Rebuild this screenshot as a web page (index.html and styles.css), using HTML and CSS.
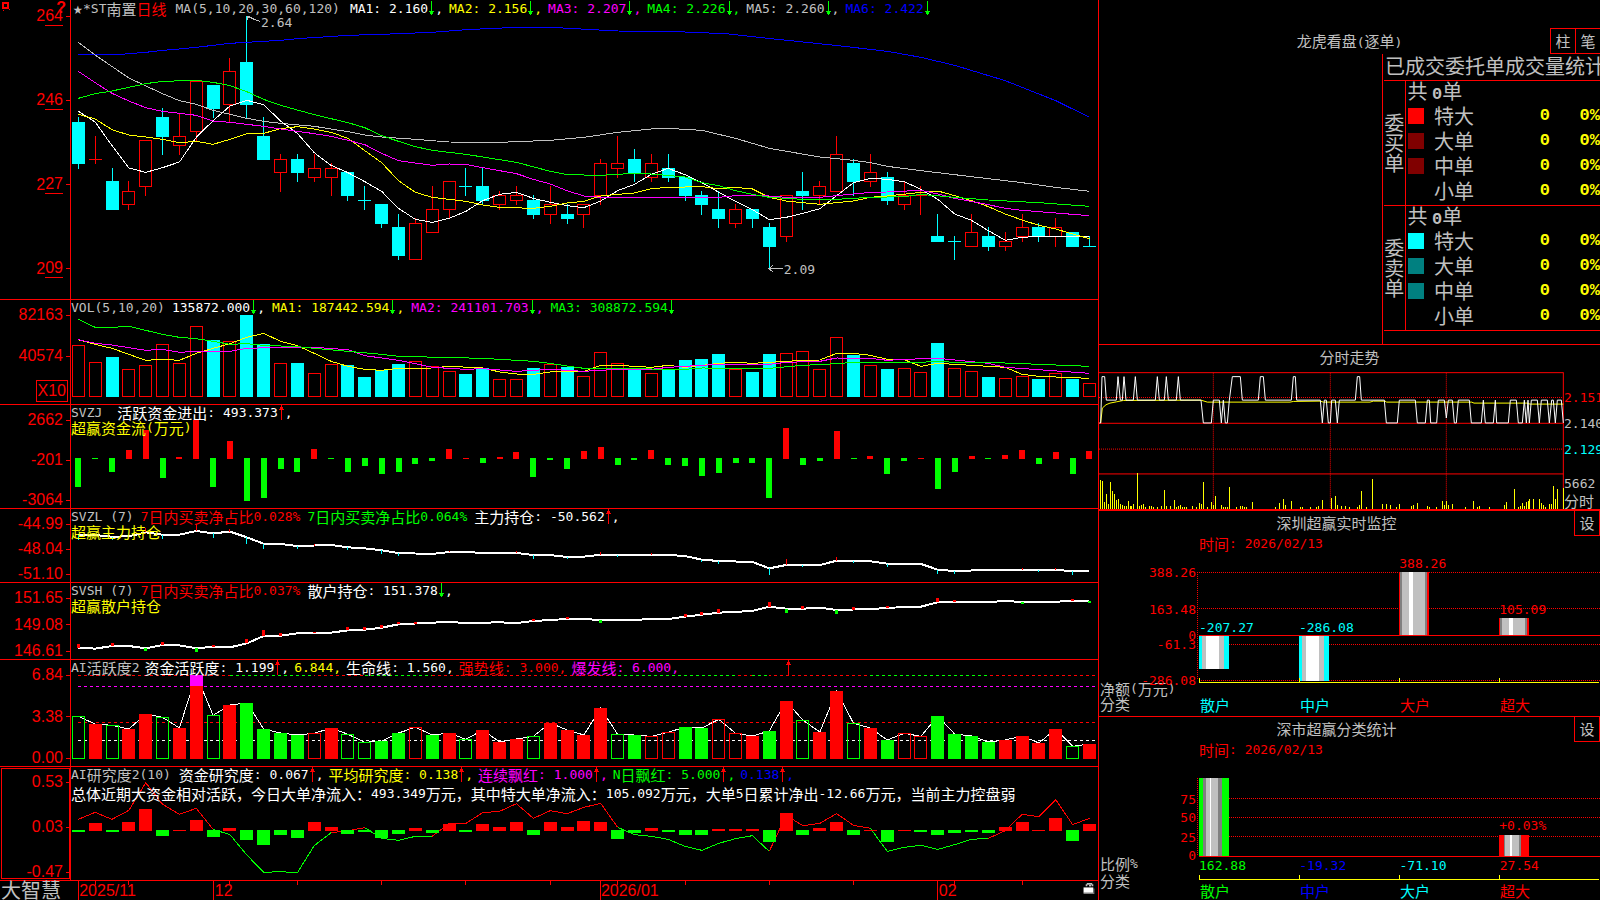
FILE: index.html
```html
<!DOCTYPE html>
<html lang="zh-CN">
<head>
<meta charset="utf-8">
<title>大智慧 *ST南置</title>
<link rel="stylesheet" href="styles.css">
</head>
<body>
<svg class="defs" aria-hidden="true">
  <symbol id="dn" viewBox="0 0 7 15"><path d="M3 0h1v14h-1zM1 10h5v1h-5zM2 11h3v2h-3z" fill="#0f0"/></symbol>
  <symbol id="up" viewBox="0 0 7 15"><path d="M3 0h1v15h-1zM2 2h3v2h-3zM1 4h5v1h-5z" fill="#f00"/></symbol>
</svg>
<main class="app">
  <section class="left">
    <article class="panel p-main">
      <div class="axis axis-main">
        <svg class="corner" viewBox="0 0 9 9"><path d="M0 0h7v7h-7zM2 2v3h3v-3z" fill="#f00" fill-rule="evenodd"/><path d="M7 7h1v1h-1zM1 8h1v1h-1z" fill="#f00"/></svg>
        <b class="query">?</b>
        <span>2<u>64</u></span><span>2<u>46</u></span><span>2<u>27</u></span><span>2<u>09</u></span>
      </div>
      <div class="plot">
        <svg class="chart" id="kline" viewBox="0 0 1027 897" preserveAspectRatio="none"></svg>
        <header class="line lead">
          <span class="grp gray name"><span class="star">★</span>*ST<span class="zh">南置</span><span class="zh red">日线</span></span>
          <span class="gray params">MA(5,10,20,30,60,120)</span>
          <span class="grp white">MA1: 2.160<svg class="ar"><use href="#dn"/></svg>,</span>
          <span class="grp yellow">MA2: 2.156<svg class="ar"><use href="#dn"/></svg>,</span>
          <span class="grp magenta">MA3: 2.207<svg class="ar"><use href="#dn"/></svg>,</span>
          <span class="grp green">MA4: 2.226<svg class="ar"><use href="#dn"/></svg>,</span>
          <span class="grp gray">MA5: 2.260<svg class="ar"><use href="#dn"/></svg>,</span>
          <span class="grp blue">MA6: 2.422<svg class="ar"><use href="#dn"/></svg></span>
        </header>
        <span class="callout hi">2.64</span>
        <span class="callout lo">2.09</span>
      </div>
    </article>

    <article class="panel">
      <div class="axis axis-vol"><span>82163</span><span class="mid">40574</span><em>X10</em></div>
      <div class="plot">
        <svg class="chart" id="vol" viewBox="0 15 1027 312" preserveAspectRatio="none"></svg>
        <header class="line loose">
          <span class="gray">VOL(5,10,20)</span>
          <span class="grp white">135872.000<svg class="ar"><use href="#dn"/></svg>,</span>
          <span class="grp yellow">MA1: 187442.594<svg class="ar"><use href="#dn"/></svg>,</span>
          <span class="grp magenta">MA2: 241101.703<svg class="ar"><use href="#dn"/></svg>,</span>
          <span class="grp green">MA3: 308872.594<svg class="ar"><use href="#dn"/></svg></span>
        </header>
      </div>
    </article>

    <article class="panel">
      <div class="axis"><span>2662</span><span>-201</span><span>-3064</span></div>
      <div class="plot">
        <svg class="chart" id="flow" viewBox="0 330 1027 309" preserveAspectRatio="none"></svg>
        <header class="line">
          <span class="gray wide">SVZJ</span>
          <span class="grp white"><span class="zh">活跃资金进出</span>: 493.373<svg class="ar"><use href="#up"/></svg>,</span>
        </header>
        <div class="line yellow"><span class="grp"><span class="zh">超赢资金流</span>(<span class="zh">万元</span>)</span></div>
      </div>
    </article>

    <article class="panel">
      <div class="axis"><span>-44.99</span><span>-48.04</span><span>-51.10</span></div>
      <div class="plot">
        <svg class="chart" id="hold" viewBox="0 642 1027 219" preserveAspectRatio="none"></svg>
        <header class="line loose">
          <span class="gray">SVZL (7)</span>
          <span class="grp red">7<span class="zh">日内买卖净占比</span>0.028%</span>
          <span class="grp green">7<span class="zh">日内买卖净占比</span>0.064%</span>
          <span class="grp white"><span class="zh">主力持仓</span>: -50.562<svg class="ar"><use href="#up"/></svg>,</span>
        </header>
        <div class="line yellow"><span class="zh">超赢主力持仓</span></div>
      </div>
    </article>

    <article class="panel">
      <div class="axis"><span>151.65</span><span>149.08</span><span>146.61</span></div>
      <div class="plot">
        <svg class="chart" id="retail" viewBox="0 9 1027 228" preserveAspectRatio="none"></svg>
        <header class="line loose">
          <span class="gray">SVSH (7)</span>
          <span class="grp red">7<span class="zh">日内买卖净占比</span>0.037%</span>
          <span class="grp white"><span class="zh">散户持仓</span>: 151.378<svg class="ar"><use href="#dn"/></svg>,</span>
        </header>
        <div class="line yellow"><span class="zh">超赢散户持仓</span></div>
      </div>
    </article>

    <article class="panel">
      <div class="axis"><span>6.84</span><span>3.38</span><span>0.00</span></div>
      <div class="plot">
        <svg class="chart" id="active" viewBox="0 240 1027 318" preserveAspectRatio="none"></svg>
        <header class="line">
          <span class="grp gray">AI<span class="zh">活跃度</span>2</span>
          <span class="grp white"><span class="zh">资金活跃度</span>: 1.199<svg class="ar"><use href="#up"/></svg>,</span>
          <span class="yellow">6.844,</span>
          <span class="grp white"><span class="zh">生命线</span>: 1.560,</span>
          <span class="grp red"><span class="zh">强势线</span>: 3.000,</span>
          <span class="grp magenta"><span class="zh">爆发线</span>: 6.000,</span>
          <svg class="ar lone"><use href="#up"/></svg>
        </header>
      </div>
    </article>

    <article class="panel">
      <div class="axis axis-sel"><span>0.53</span><span>0.03</span><span>-0.47</span></div>
      <div class="plot">
        <svg class="chart" id="study" viewBox="0 561 1027 339" preserveAspectRatio="none"></svg>
        <header class="line">
          <span class="grp gray">AI<span class="zh">研究度</span>2(10)</span>
          <span class="grp white lg"><span class="zh">资金研究度</span>: 0.067<svg class="ar"><use href="#up"/></svg>,</span>
          <span class="grp yellow"><span class="zh">平均研究度</span>: 0.138<svg class="ar"><use href="#up"/></svg>,</span>
          <span class="grp magenta"><span class="zh">连续飘红</span>: 1.000<svg class="ar"><use href="#up"/></svg>,</span>
          <span class="grp green">N<span class="zh">日飘红</span>: 5.000<svg class="ar"><use href="#up"/></svg>,</span>
          <span class="grp blue">0.138<svg class="ar"><use href="#up"/></svg>,</span>
        </header>
        <p class="line note white"><span class="zh">总体近期大资金相对活跃，今日大单净流入：</span>493.349<span class="zh">万元，其中特大单净流入：</span>105.092<span class="zh">万元，大单</span>5<span class="zh">日累计净出</span>-12.66<span class="zh">万元，当前主力控盘弱</span></p>
      </div>
    </article>

    <footer class="timeline">
      <div class="brand">大智慧</div>
      <div class="plot">
        <svg class="chart" id="dates" viewBox="0 903 1027 57" preserveAspectRatio="none"></svg>
        <span class="date d1">2025/11</span><span class="date d2">12</span><span class="date d3">2026/01</span><span class="date d4">02</span>
        <svg class="lock" viewBox="0 0 11 12"><path d="M2 4V2h1V1h5v1h1v2h-1.500V2.500h-4V4z" fill="#c0c0c0"/><path d="M5 3h2v1h-2z" fill="#fff"/><path d="M0 5h9v5h-9z" fill="#fff"/><path d="M9 6h1v5h-10v-1h9z" fill="#808080"/></svg>
      </div>
    </footer>
  </section>

  <section class="right">
    <article class="orders">
      <header class="orders-head">
        <h2>龙虎看盘<span class="en">(</span>逐单<span class="en">)</span></h2>
        <div class="tabs"><button type="button">柱</button><button type="button">笔</button></div>
      </header>
      <div class="book">
        <h3>已成交委托单成交量统计</h3>
        <table>
          <colgroup><col class="k1"><col class="k2"><col><col class="k3"><col class="k3"></colgroup>
          <tbody>
            <tr><th rowspan="5" scope="rowgroup" class="side">委<br>买<br>单</th><td colspan="4" class="sum">共 <b>0</b>单</td></tr>
            <tr><td><i class="sq c1"></i></td><th scope="row">特大</th><td class="num">0</td><td class="num">0%</td></tr>
            <tr><td><i class="sq c2"></i></td><th scope="row">大单</th><td class="num">0</td><td class="num">0%</td></tr>
            <tr><td><i class="sq c2"></i></td><th scope="row">中单</th><td class="num">0</td><td class="num">0%</td></tr>
            <tr><td></td><th scope="row">小单</th><td class="num">0</td><td class="num">0%</td></tr>
          </tbody>
          <tbody>
            <tr><th rowspan="5" scope="rowgroup" class="side">委<br>卖<br>单</th><td colspan="4" class="sum">共 <b>0</b>单</td></tr>
            <tr><td><i class="sq c3"></i></td><th scope="row">特大</th><td class="num">0</td><td class="num">0%</td></tr>
            <tr><td><i class="sq c4"></i></td><th scope="row">大单</th><td class="num">0</td><td class="num">0%</td></tr>
            <tr><td><i class="sq c4"></i></td><th scope="row">中单</th><td class="num">0</td><td class="num">0%</td></tr>
            <tr><td></td><th scope="row">小单</th><td class="num">0</td><td class="num">0%</td></tr>
          </tbody>
        </table>
      </div>
    </article>

    <article class="intraday">
      <h2>分时走势</h2>
      <div class="intra-body">
        <div class="plot"><svg class="chart" id="intra" viewBox="27 96 1395 414" preserveAspectRatio="none"></svg></div>
        <div class="prices"><span class="red">2.151</span><span class="gray">2.140</span><span class="cyan">2.129</span><small>5662</small><small class="zh">分时</small></div>
      </div>
    </article>

    <article class="stat">
      <header class="stat-head"><h2>深圳超赢实时监控</h2><button type="button">设</button></header>
      <p class="when"><span class="zh">时间</span>: 2026/02/13</p>
      <div class="stat-chart">
        <div class="scale"><span class="v1">388.26</span><span class="v2">163.48</span><span class="v3">0</span><span class="v4">-61.3</span><span class="v5">-286.08</span></div>
        <div class="plot">
          <svg class="chart" id="net" viewBox="321 201 1209 333" preserveAspectRatio="none"></svg>
          <span class="val a cyan">-207.27</span><span class="val b cyan">-286.08</span><span class="val c red">388.26</span><span class="val d red">105.09</span>
        </div>
      </div>
      <div class="cats">
        <div class="names"><span><span class="zh">净额</span>(<span class="zh">万元</span>)</span><span class="zh">分类</span></div>
        <span class="zh cyan">散户</span><span class="zh cyan">中户</span><span class="zh red">大户</span><span class="zh red">超大</span>
      </div>
    </article>

    <article class="stat last">
      <header class="stat-head"><h2>深市超赢分类统计</h2><button type="button">设</button></header>
      <p class="when"><span class="zh">时间</span>: 2026/02/13</p>
      <div class="stat-chart">
        <div class="scale"><span class="w1">75</span><span class="w2">50</span><span class="w3">25</span><span class="w4">0</span>
          <div class="names tall"><span><i class="zh">比例</i>%</span><i class="zh">分类</i></div>
        </div>
        <div class="plot">
          <svg class="chart" id="ratio" viewBox="321 204 1209 306" preserveAspectRatio="none"></svg>
          <span class="val e red">+0.03%</span>
          <div class="vals"><span class="green">162.88</span><span class="blue">-19.32</span><span class="cyan">-71.10</span><span class="red">27.54</span></div>
        </div>
      </div>
      <div class="cats">
        <span class="zh green second">散户</span><span class="zh blue">中户</span><span class="zh cyan">大户</span><span class="zh red">超大</span>
      </div>
    </article>
  </section>
</main>
<script src="charts.js"></script>
</body>
</html>
```

FILE: styles.css
```css
* { box-sizing: border-box; }
body {
  margin: 0;
  background: #000;
  color: #c0c0c0;
  font: 13px/15px "DejaVu Sans Mono", "Liberation Mono", "Noto Sans CJK SC", monospace;
  overflow: hidden;
}
h2, h3, p { margin: 0; font-weight: 400; }
i { font-style: normal; }
.defs { position: absolute; width: 0; height: 0; }
.zh, h2 { font-family: "Noto Sans CJK SC", sans-serif; font-size: 15px; line-height: 15px; font-weight: 400; }
.red { color: #f00; }
.green { color: #0f0; }
.blue { color: #00f; }
.cyan { color: #0ff; }
.yellow { color: #ff0; }
.magenta { color: #f0f; }
.white { color: #fff; }
.gray { color: #c0c0c0; }

.app { display: grid; grid-template-columns: minmax(0, 1099fr) minmax(0, 501fr); min-height: 100vh; }
.left {
  display: grid;
  grid-template-rows: 300fr 105fr 104fr 74fr 77fr 107fr 114fr 19fr;
  border-right: 1px solid #f00;
}
.panel, .timeline { display: grid; grid-template-columns: 71px minmax(0, 1fr); min-height: 0; }
.panel { border-bottom: 1px solid #f00; }
.plot { position: relative; min-width: 0; }
.chart { position: absolute; inset: 0; width: 100%; height: 100%; shape-rendering: crispEdges; }
.chart * { vector-effect: non-scaling-stroke; }

.axis {
  position: relative;
  display: flex;
  flex-direction: column;
  align-items: flex-end;
  justify-content: space-between;
  padding-top: 7px;
  border-right: 1px solid #f00;
  color: #f00;
  font: 16px/16px "Liberation Sans", Arial, sans-serif;
}
.axis span { display: flex; align-items: center; }
.axis span::after { content: ""; width: 4px; height: 1px; margin-left: 3px; background: #f00; }
.axis u { text-decoration: none; border-bottom: 1px solid #f00; line-height: 18px; }
.axis-main { padding-top: 8px; padding-bottom: 22px; }
.axis-main span { height: 16px; }
.axis-vol { justify-content: flex-start; }
.axis-vol .mid { margin-top: 25px; }
.axis-vol em { margin: auto 2px 2px 0; padding: 2px 1px; border: 1px solid #f00; font-style: normal; }
.axis-sel { outline: 1px solid #f00; outline-offset: -2px; }
.corner { position: absolute; left: 2px; top: 2px; width: 9px; height: 9px; }
.query { position: absolute; right: 4px; top: 0; }

.line { position: relative; display: flex; align-items: center; gap: 5px; height: 15px; white-space: nowrap; }
.line.lead { padding-left: 2px; height: 17px; gap: 6px; }
.line.loose { gap: 7px; }
.line.note { gap: 0; margin-top: 4px; }
.grp { display: flex; align-items: center; }
.ar { width: 7px; height: 15px; flex: none; }
.star { width: 10px; font-size: 16px; }
.name { margin-right: 3px; }
.params { margin-right: 4px; }
.lg { margin-left: 3px; }
.wide { margin-right: 10px; }
.lone { margin-left: 101px; }
.callout { position: absolute; }
.callout.hi { left: 18.5%; top: 15px; }
.callout.lo { left: 69.4%; top: 87.5%; }

.brand { padding-left: 1px; font: 400 20px/17px "Noto Sans CJK SC", sans-serif; white-space: nowrap; }
.date { position: absolute; top: 1px; color: #f00; font: 16px/17px "Liberation Sans", Arial, sans-serif; }
.d1 { left: 0.8%; }
.d2 { left: 14%; }
.d3 { left: 51.6%; }
.d4 { left: 84.5%; }
.lock { position: absolute; right: 2px; top: 1px; width: 13px; height: 13px; }

.right { display: grid; grid-template-rows: 345fr 166fr 206fr 183fr; min-width: 0; }
.right h2 { text-align: center; }
button { color: #c0c0c0; background: #000; border: 1px solid #f00; padding: 0; width: 26px; height: 26px; font: 400 15px/20px "Noto Sans CJK SC", sans-serif; }
.orders { display: flex; flex-direction: column; align-items: flex-end; border-bottom: 1px solid #f00; overflow: hidden; }
.orders-head { display: grid; grid-template-columns: 50px 1fr 50px; align-items: center; width: 100%; padding-top: 28px; }
.orders-head h2 { grid-column: 2; }
.en { font: 13px "DejaVu Sans Mono", monospace; }
.tabs { display: flex; }
.tabs button { flex: none; }
.tabs button + button { width: 24px; border-left: 0; border-right: 0; }
.book { flex: 1; width: 218px; padding-left: 1px; border-left: 1px solid #f00; }
.book h3 { height: 26px; padding-left: 1px; font: 400 20px/24px "Noto Sans CJK SC", sans-serif; white-space: nowrap; }
.book table { width: 100%; border-collapse: collapse; table-layout: fixed; font: 400 20px/20px "Noto Sans CJK SC", sans-serif; border-bottom: 1px solid #f00; }
.k1 { width: 21px; }
.k2 { width: 23px; }
.k3 { width: 50px; }
.book tbody { border-top: 1px solid #f00; }
.book tr { height: 25px; }
.book td, .book th { padding: 0; font-weight: 400; white-space: nowrap; vertical-align: top; line-height: 20px; }
.book th { text-align: left; padding-left: 6px; }
.book .side { padding: 0; border-right: 1px solid #f00; text-align: center; vertical-align: middle; }
.book .sum { padding-left: 2px; }
.book .sum b, .book .num { font-family: "Liberation Mono", monospace; font-weight: 700; font-size: 17px; }
.book .num { color: #ff0; text-align: right; }
.sq { display: block; width: 16px; height: 16px; margin: 2px 0 0 2px; }
.c1 { background: #f00; }
.c2 { background: #800000; }
.c3 { background: #0ff; }
.c4 { background: #008080; }

.intraday { display: flex; flex-direction: column; border-bottom: 2px solid #f00; }
.intraday h2 { height: 27px; line-height: 23px; }
.intra-body { flex: 1; display: grid; grid-template-columns: minmax(0, 1fr) 36px; }
.prices { display: flex; flex-direction: column; padding: 13px 0 0; line-height: 26px; }
.prices small { font-size: 13px; line-height: 17px; }
.prices small.zh { font-size: 15px; }
.prices span + small { margin-top: 12px; }

.stat { display: flex; flex-direction: column; border-bottom: 1px solid #f00; }
.stat.last { border-bottom: 0; }
.stat-head { display: grid; grid-template-columns: 1fr 26px; height: 25px; }
.stat-head h2 { line-height: 23px; }
.stat-head button { border-top: 0; height: 25px; }
.stat .when { display: flex; align-items: center; padding: 0 0 0 100px; color: #f00; height: 15px; }
.stat-chart { flex: 1; display: grid; grid-template-columns: 98px minmax(0, 1fr); min-height: 0; margin-top: 21px; }
.scale { position: relative; color: #f00; }
.scale > span { position: absolute; right: 1px; margin-top: -7px; }
.v1 { top: 0; }
.v2 { top: 33%; }
.v3 { top: 57%; }
.v4 { top: 65%; }
.v5 { top: 97%; }
.w1 { top: 20%; }
.w2 { top: 38%; }
.w3 { top: 57%; }
.w4 { top: 75%; }
.val { position: absolute; margin-top: -8px; }
.val.a { left: 0.5%; top: 50%; }
.val.b { left: 25.3%; top: 50%; }
.val.c { left: 50.2%; top: -8px; }
.val.d { left: 75%; top: 34%; }
.val.e { left: 75%; top: 47%; }
.vals { position: absolute; left: 2px; right: 0; top: 78%; display: grid; grid-template-columns: repeat(4, 1fr); }
.cats { display: grid; grid-template-columns: 101px repeat(4, minmax(0, 1fr)); height: 33px; align-items: center; white-space: nowrap; }
.cats > .zh { padding-top: 9px; }
.cats .names { display: flex; flex-direction: column; justify-content: flex-end; height: 33px; padding: 0 0 5px 1px; }
.names > span { display: flex; align-items: center; }
.stat.last .cats { height: 19px; }
.stat.last .cats > .zh { padding: 0; }
.cats .second { grid-column: 2; }
.tall { position: absolute; left: 1px; top: 76%; display: flex; flex-direction: column; gap: 2px; color: #c0c0c0; }
```

FILE: charts.js
```js
const STEP = 16.853, X0 = 7.3;
const RED = '#f00', GREEN = '#0f0', CYAN = '#0ff', WHITE = '#fff', GRAY = '#c0c0c0', DARK = '#808080';
const YELLOW = '#ff0', MAGENTA = '#f0f', BLUE = '#00f';
const px = i => +(X0 + STEP * i).toFixed(2);
const rect = (x, y, w, h, c) => `<rect x="${x}" y="${y}" width="${w}" height="${h}" fill="${c}"/>`;
const box = (x, y, w, h, c) => `<rect x="${x}" y="${y}" width="${w}" height="${h}" fill="none" stroke="${c}"/>`;
const seg = (x1, y1, x2, y2, c, extra = '') => `<path d="M${x1} ${y1}L${x2} ${y2}" fill="none" stroke="${c}" ${extra}/>`;
const poly = (pts, c, w = 1) => `<polyline points="${pts}" fill="none" stroke="${c}" stroke-width="${w}"/>`;
// "index:y" pairs separated by spaces
const series = (s, c, w) => poly(s.trim().split(/\s+/).map(p => { const [i, y] = p.split(':'); return px(+i) + ',' + y; }).join(' '), c, w);
const put = (id, html) => { document.getElementById(id).innerHTML = html; };

// Candles: colour, high, low, body top, body bottom
const candles = `C351,507,366,492 R407,492,478,478 C504,630,543,630 R543,630,573,614 R420,588,420,560 C324,465,351,411
R341,465,408,437 R243,423,243,395 C255,354,255,327 R174,366,213,314 C48,354,186,315 C351,480,408,480 R462,576,478,518
C462,546,477,519 R462,546,504,533 R489,588,504,533 C516,603,516,588 C558,630,601,601 C612,684,612,672 C642,780,681,768
R654,779,670,779 R558,698,628,698 R544,654,544,629 C504,588,559,559 C504,612,558,603 R573,630,586,614 R558,615,586,602
C585,657,600,645 R558,672,612,644 C612,672,642,657 R612,684,612,644 R477,614,490,587 R408,534,490,506 C447,546,477,521
R462,546,490,533 C462,546,504,534 C531,603,531,588 C573,645,585,615 C573,684,627,657 R612,684,628,671 C627,684,627,657
C669,806,681,741 R586,726,586,710 C516,630,573,588 R543,612,559,587 R408,575,463,575 C477,588,489,546 R462,561,517,545
C516,615,531,603 R543,630,586,614 R558,645,586,586 C642,726,708,726 C708,780,724,724 R642,740,697,740 C681,753,708,741
R696,753,724,740 R642,726,682,710 C669,726,681,710 R654,741,682,710 C696,741,696,741 C708,740,740,740`.split(/\s+/);
let k = '';
candles.forEach((s, i) => {
  const c = s[0] === 'C' ? CYAN : RED, [hi, lo, t, b] = s.slice(1).split(',').map(Number), x = px(i);
  if (t === b) k += seg(x, hi, x, lo, c) + seg(x - 6.5, t, x + 6.5, t, c);
  else if (c === CYAN) k += seg(x, hi, x, lo, c) + rect(x - 6.5, t, 13, b - t, c);
  else k += seg(x, hi, x, t, c) + seg(x, b, x, lo, c) + box(x - 6, t, 12, b - t, c);
});
k += series('0:163 2.5:163 4:157 5:151 6:147 7:142 8:136 9:130 10:127 12:121 13:116 16:106 18:103 20:99 21:97 23:89 26:82 28:82 32:93 35.5:95 38.4:101 41.3:117 45.1:137 48:154 50:172 52:196 55:242 58:302 60:352', BLUE);
k += series('0:127 1:165 3:234 5:281 6:302 7:313 8:331 9:343 10:355 11:364 12:370 14:379 16:395 17:405 18:411 20:418 22:426 25:427 28:421 30:412 32:397 34:387 35:385 37:391 38:403 39:415 41:445 44:471 46:481 47:488 48:499 50:512 52:524 56:548 58:562 60:574', GRAY);
k += series('0:334 1:366 2:437 3:504 4:517 5:503 6:486 7:412 8:362 9:318 10:301 11:314 12:363 13:400 14:458 15:496 16:518 17:545 18:574 19:625 20:658 21:667 22:655 23:634 24:602 25:583 26:577 27:595 28:607 29:617 30:623 31:603 32:572 33:553 34:523 35:505 36:524 37:548 38:577 39:604 40:629 41:659 42:652 43:640 44:626 45:587 46:548 47:535 48:538 49:545 50:568 51:598 52:642 53:661 54:692 55:721 56:712 57:709 60:709', WHITE);
k += series('0:343 1:357 2:389 3:405 4:411 5:418 6:428 7:424 8:433 9:418 10:401 11:400 12:386 13:380 14:387 15:397 16:415 17:452 18:488 19:542 20:577 21:592 22:598 23:604 24:615 25:622 27:625 28:619 29:609 30:604 31:588 32:583 33:579 34:566 35:562 37:560 38:566 39:562 40:567 41:592 42:603 43:608 44:613 46:603 47:592 48:588 50:577 51:573 52:587 53:602 54:620 55:642 56:660 57:676 58:687 59:702 60:716', YELLOW);
k += series('0:214 1:248 2:280 3:303 4:323 5:334 7:346 8:363 9:367 10:373 11:379 12:387 14:401 15:409 16:421 17:434 18:460 19:482 21:496 22:492 23:493 24:503 26:521 27:538 28:552 29:572 30:588 31:592 38:592 39:587 41:588 42:592 44:592 46:582 47:577 48:576 50:571 51:582 52:595 54:614 55:625 56:631 60:647', MAGENTA);
k += series('0:295 1:281 2:273 3:262 4:251 5:244 7:241 8:247 9:257 10:275 11:298 12:316 14:344 16:368 17:383 18:407 19:424 20:440 21:451 23:463 26:487 28:514 29:524 31:526 33:520 34:522 36:531 37:548 38:557 39:572 40:583 41:592 43:598 45:598 47:592 49:590 50:583 52:592 54:600 57:608 60:619', GREEN);
k += poly('189,64 176,50 181,52', GRAY) + poly('176,50 176,60', GRAY);
k += poly('712,806 698,806 702,796', GRAY) + poly('698,806 702,816', GRAY);
put('kline', k);

const vols = 'R151 R202 C186 R223 R211 R148 R205 R94 C135 R139 C60 C147 R205 C204 R235 R208 C211 C246 C226 C207 R199 R214 R229 C237 C219 R253 R253 C219 R208 C216 R244 R172 R205 C222 R235 C222 C195 C192 C177 R223 C231 C177 R175 R169 R223 R127 C180 R211 C222 R220 R232 C144 R220 R229 C246 R250 R244 C252 R235 C252 R265'.split(' ');
let v = '';
vols.forEach((s, i) => {
  const y = +s.slice(1), x = px(i);
  v += s[0] === 'C' ? rect(x - 6.5, y, 13, 306 - y, CYAN) : box(x - 6, y, 12, 304 - y, RED);
});
v += series('0:134 1:148 2:160 3:178 4:196 5:193 6:196 7:175 8:160 9:146 10:127 11:115 12:139 13:152 14:175 15:199 16:214 17:223 18:226 19:220 21:219 22:214 24:219 25:231 26:237 27:238 28:231 30:229 31:211 32:211 34:217 35:211 36:217 38:205 39:202 40:205 41:202 43:196 44:195 45:175 46:175 47:181 48:193 49:194 50:214 51:205 52:208 55:217 56:238 57:244 60:250', YELLOW);
v += series('0:134 1:145 2:150 3:158 4:166 5:163 6:172 7:169 9:169 10:160 12:157 14:157 16:164 17:182 19:196 20:206 21:217 23:223 24:221 26:229 28:223 30:229 32:223 34:223 35:217 38:208 41:208 42:202 44:199 45:189 47:190 48:196 49:193 51:190 54:205 55:217 60:235', MAGENTA);
v += series('0:73 1:97 2:97 3:94 4:106 5:118 6:127 7:131 8:139 9:148 10:146 11:151 13:155 14:160 16:169 18:178 19:184 24:190 27:199 28:205 29:213 30:220 36:223 37:219 41:220 43:211 45:206 46:202 50:202 51:199 52:202 54:202 57:208 60:214', GREEN);
put('vol', v);

const flow = [576,492,531,465,405,549,486,375,576,438,618,609,522,531,462,492,531,513,537,531,507,498,462,488,504,486,471,546,495,522,468,456,510,495,465,510,513,543,534,504,504,609,399,510,498,408,492,483,537,498,488,582,531,483,492,480,465,507,471,537,468];
put('flow', flow.map((y, i) => y < 490 ? rect(px(i) - 3, y, 6, 492 - y, RED) : rect(px(i) - 3, 489, 6, Math.max(3, y - 489), GREEN)).join(''));

const ticks = (s, base, w, down) => s.split(' ').map(t => {
  const [, i, c, y] = t.match(/(\d+)([rg])(\d+)/), up = c === 'r', at = base(+i);
  return rect(px(+i) - w / 2, Math.min(+y, at), w, Math.abs(y - at), up ? RED : down);
}).join('');
const lookup = s => {
  const p = s.split(' ').map(q => q.split(':').map(Number));
  return i => { for (let n = 1; n < p.length; n++) if (i <= p[n][0]) { const [a, b] = p[n - 1], [c, d] = p[n]; return b + (d - b) * (i - a) / (c - a); } return p[p.length - 1][1]; };
};
const hold = '0:719 1:720 2:725 3:724 4:712 5:719 6:719 7:708 8:715 9:710 10:727 11:746 12:747 13:753 15:750 16:757 17:760 18:766 19:774 21:777 22:771 24:773 26:774 27:780 28:780 29:786 30:785 31:779 35:780 36:783 37:794 38:798 40:801 41:820 42:810 44:810 45:797 46:797 47:799 48:806 50:807 51:824 52:828 54:825 58:825 59:828 60:828';
put('hold', series(hold, WHITE, 2) + ticks('0g735 2g735 4r700 5g732 6r721 7r687 8g729 9r702 10g747 11g762 13g762 14r747 16g765 18g777 19g783 22r767 26r768 27g792 29g792 31r771 32g785 34r773 37g801 38g807 41g840 42r792 43g815 45r786 46g803 48g816 51g837 52g837 56r819 57g831 58r819 59g840', lookup(hold), 1, CYAN));
const retail = '0:203 1:206 2:198 3:198 4:205 5:195 6:196 7:205 8:200 9:202 10:190 11:168 12:167 13:160 15:158 16:151 17:149 18:143 19:133 21:128 22:126 23:129 25:127 26:129 27:123 28:120 29:117 30:117 31:120 33:119 35:117 36:110 38:98 40:93 41:80 42:86 43:86 44:83 45:90 47:87 49:81 50:80 51:67 52:65 54:66 55:63 56:66 59:64 60:63';
put('retail', series(retail, WHITE, 2) + ticks('0r192 2r189 4g212 5r186 7g215 8r195 10r177 11r150 12r159 14r155 16r141 17r141 18r135 19r126 20r126 27r117 29r111 31g129 36r102 37r96 38r87 41r66 42g98 43r78 45g101 46r81 48r77 51r54 52r60 56g72 59r57 60g69', lookup(retail), 3, GREEN));

// r/g solid, h/k outlined
const act = 'k409 r432 k436 r447 r402 k412 r444 r285 k406 r375 g369 g447 g459 g465 h460 r444 k463 k487 g483 g459 h442 g465 r459 k478 r450 r486 r477 k469 r429 r450 r465 r384 k463 g465 h469 h457 g441 g444 h418 h460 r468 g453 r363 k421 r456 r333 k430 r444 g480 h460 h469 g408 g462 g468 g486 r480 r468 r489 r447 k499 r492'.split(' ');
const span = (a, b, y, c, d = '3 3') => seg(px(a), y, px(b), y, c, `stroke-dasharray="${d}"`);
let a = span(0, 60.6, 481, WHITE) + span(0, 60.6, 427, RED) + span(0, 60.6, 319, MAGENTA) + span(0, 60.4, 286, RED);
[[9, 14], [17, 21], [32, 39], [40, 41], [47, 54]].forEach(([s, e]) => { a += seg(px(s), 286, px(e), 286, '#000') + span(s, e, 286, GREEN); });
a += poly(act.map((s, i) => px(i) + ',' + s.slice(1)).join(' '), WHITE);
act.forEach((s, i) => {
  const y = +s.slice(1), x = px(i), c = 'rh'.includes(s[0]) ? RED : GREEN;
  a += 'rg'.includes(s[0]) ? rect(x - 6.5, y, 13, 537 - y, c) : box(x - 6, y, 12, 535 - y, c);
});
a += rect(px(7) - 6.5, 285, 13, 33, MAGENTA);
put('active', a);

const study = [756,729,756,726,687,768,750,720,771,744,780,795,765,774,726,741,762,756,774,762,744,759,732,756,732,741,726,765,726,741,723,726,777,759,744,756,765,765,747,747,747,786,699,765,744,726,765,750,786,750,756,765,759,756,759,741,726,750,714,783,732];
put('study',
  series('0:718 1:697 2:718 3:691 4:608 5:673 6:703 7:685 8:748', RED) +
  series('15:758 16:752 17:743', RED) +
  series('21:769 22:730 23:730 24:698 25:694 26:671 27:715 28:692 29:701 30:682 31:670 32:742', RED) +
  series('41:814 42:706 43:737 44:730 45:701 46:736 47:745', RED) +
  series('54:775 55:752 56:703 57:710 58:659 59:734 60:715', RED) +
  series('8:748 9:764 10:825 11:877 12:875 13:878 14:797 15:758', GREEN) +
  series('17:743 18:775 19:781 20:769 21:769', GREEN) +
  series('32:742 33:764 34:769 35:778 36:799 37:811 38:790 39:776 40:767 41:814', GREEN) +
  series('47:745 48:814 49:802 50:796 51:808 52:794 53:778 54:775', GREEN) +
  study.map((y, i) => y < 752 ? rect(px(i) - 6.5, y, 13, 753 - y, RED) : rect(px(i) - 6.5, 750, 13, Math.max(3, y - 750), GREEN)).join(''));

put('dates', [0, 8, 31, 51].map(i => seg(px(i), 903, px(i), 960, RED)).join('') +
  [1, 3, 9, 13, 18, 23, 28, 32, 36, 41, 46, 52, 56].map(i => seg(px(i), 903, px(i), 915, RED)).join(''));

const dot = 'stroke-dasharray="1 1"';
const price = '28,250 32,250 36,110 44,110 49,181 79,181 84,110 91,181 97,181 102,110 108,181 130,181 136,110 142,181 196,181 202,110 208,181 223,181 229,110 235,181 259,181 265,110 271,181 333,181 340,250 364,250 370,181 388,181 394,250 400,181 406,250 412,250 418,181 427,110 451,110 457,181 505,181 511,110 520,110 526,181 604,181 610,110 616,110 620,181 691,181 697,250 703,181 709,181 715,250 721,250 725,181 736,181 742,250 748,181 796,181 802,110 809,110 814,181 883,181 889,250 922,250 928,181 976,181 982,250 1006,250 1012,181 1018,181 1022,250 1040,250 1045,181 1063,181 1069,235 1075,181 1087,181 1093,250 1099,250 1105,181 1138,181 1144,250 1174,250 1180,181 1186,250 1210,250 1216,181 1220,250 1255,250 1261,181 1279,181 1285,250 1297,250 1303,181 1309,250 1314,181 1318,250 1324,181 1342,181 1348,250 1354,181 1372,181 1378,250 1385,181 1390,181 1396,250 1402,181 1414,181 1420,250';
const avg = '32,250 37,205 48,195 60,190 80,186 100,182 333,181 352,187 600,187 610,185 690,184 700,187 840,187 850,184 885,184 890,187 1145,187 1152,190 1310,190 1320,193 1420,193';
const deals = '31:423 37:426 43:489 49:465 55:495 61:429 67:456 73:465 79:483 85:480 91:495 97:498 103:501 109:500 115:486 121:501 125:501 130:495 142:402 148:501 154:498 160:495 166:504 178:501 184:501 190:504 202:504 214:501 223:453 229:501 241:501 253:483 259:504 265:501 271:498 277:504 283:504 289:504 307:501 319:504 328:492 334:495 340:429 352:504 364:489 370:498 376:471 394:498 400:504 406:504 412:504 418:444 439:504 451:501 457:501 463:504 469:504 487:489 556:504 568:492 580:480 586:498 604:486 631:504 637:504 661:504 679:504 685:501 697:483 724:477 736:471 742:498 754:501 766:501 778:504 802:504 808:498 814:456 829:504 847:420 877:495 889:495 901:498 919:504 928:495 964:501 970:498 982:492 1012:501 1018:504 1039:504 1057:486 1063:498 1069:486 1075:498 1087:495 1126:504 1150:486 1162:504 1168:501 1198:504 1243:498 1249:489 1273:450 1285:504 1291:501 1297:492 1303:500 1309:489 1315:486 1318:480 1330:480 1348:480 1354:492 1360:498 1366:504 1378:495 1384:495 1390:441 1396:480 1402:450 1420:447';
put('intra',
  [370, 721, 1069].map(x => seg(x, 98, x, 507, RED, dot)).join('') +
  seg(27, 173, 1420, 173, RED, dot) + seg(27, 329, 1420, 329, RED, dot) +
  seg(27, 251, 1420, 251, RED) + seg(27, 98, 1420, 98, RED) + seg(27, 404, 1420, 404, RED) + seg(1420, 97, 1420, 510, RED) +
  poly(avg, YELLOW) + poly(price, WHITE) +
  deals.split(' ').map(d => { const [x, y] = d.split(':').map(Number); return rect(x - 1.5, y, 3, 510 - y, YELLOW); }).join(''));

// Cylinder-shaded bar: stripe edges and their colours
const bar = (x, y, h, edges, cols) => cols.map((c, i) => rect(x + edges[i], y, edges[i + 1] - edges[i], h, c)).join('');
const scaleAxis = y => poly(`328,${y - 13} 328,${y} 1527,${y}`, YELLOW) + [628, 928, 1228].map(x => seg(x, y - 13, x, y, YELLOW)).join('');
const low = [0, 9, 21, 60, 75, 90], lowC = [CYAN, GRAY, WHITE, GRAY, CYAN];
const top7 = [0, 3, 9, 30, 42, 78, 84, 90], top7C = [RED, DARK, GRAY, WHITE, GRAY, DARK, RED];
put('net',
  [202, 310, 418, 526].map(y => seg(327, y, 1530, y, RED, dot)).join('') + seg(322, 202, 322, 522, RED, dot) +
  bar(327, 393, 99, low, lowC) + bar(627, 393, 135, low, lowC) + bar(927, 201, 189, top7, top7C) + bar(1227, 339, 51, top7, top7C) +
  seg(327, 391, 1530, 391, RED) + scaleAxis(532));
put('ratio',
  [265, 322, 379].map(y => seg(327, y, 1530, y, RED, dot)).join('') + seg(322, 204, 322, 436, RED, dot) +
  bar(327, 204, 231, [0, 12, 21, 33, 36, 57, 69, 90], [GREEN, DARK, GRAY, WHITE, GRAY, DARK, GREEN]) +
  bar(1227, 372, 63, [0, 15, 18, 33, 39, 60, 66, 90], [RED, DARK, GRAY, WHITE, GRAY, DARK, RED]) +
  seg(327, 436, 1530, 436, RED) + scaleAxis(505));
```
